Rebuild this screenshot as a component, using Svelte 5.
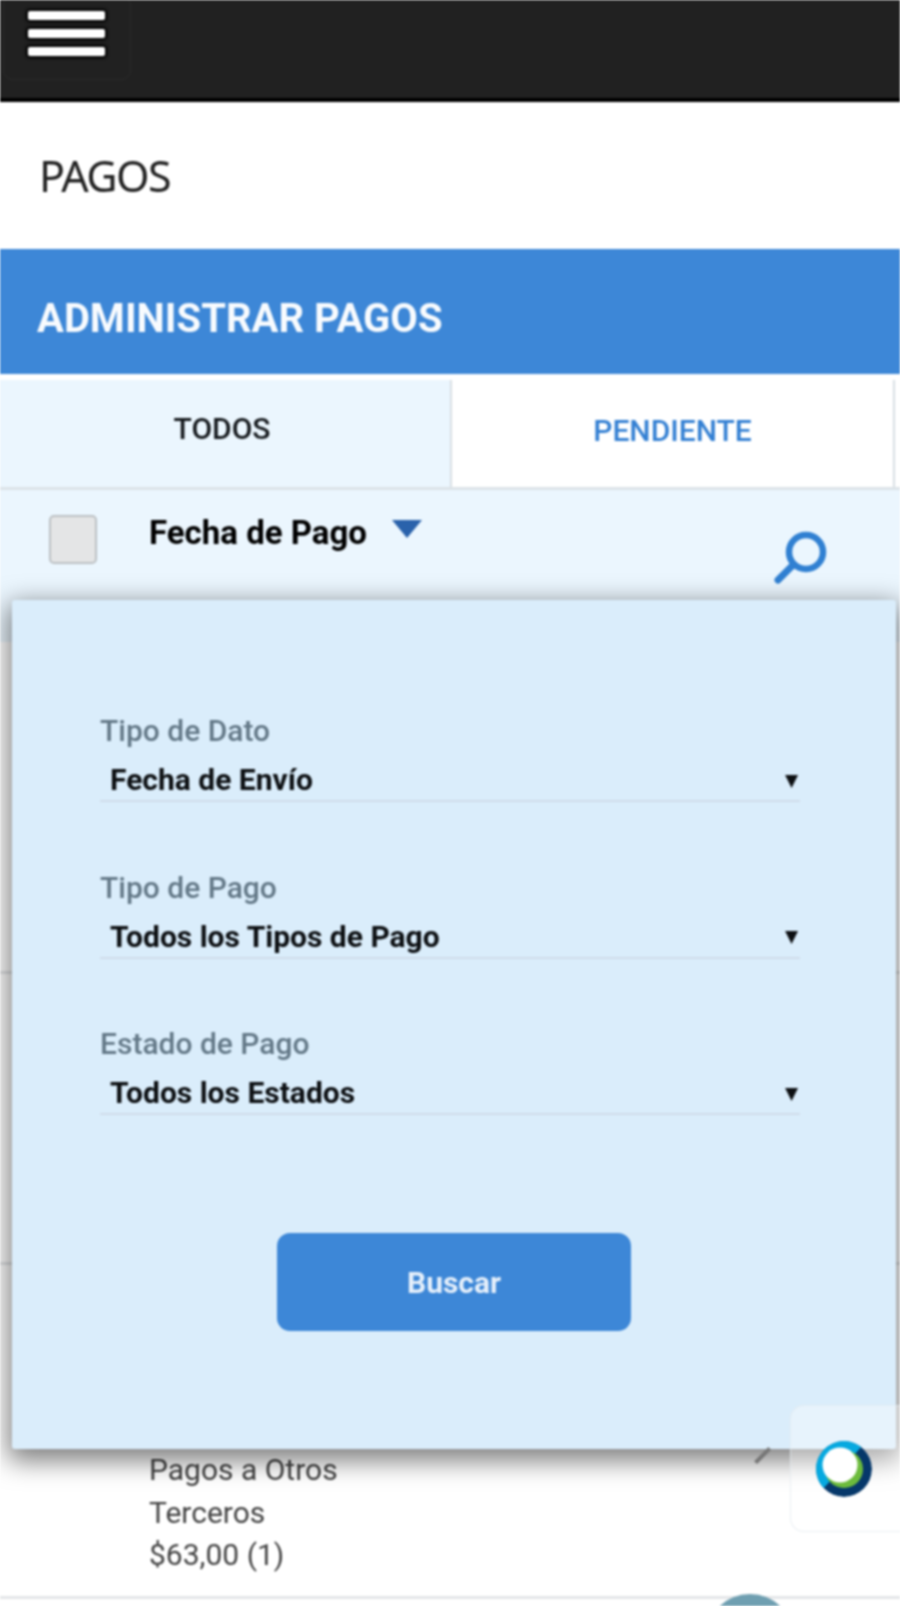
<script>
	const filters = [
		{ label: 'Tipo de Dato', value: 'Fecha de Envío' },
		{ label: 'Tipo de Pago', value: 'Todos los Tipos de Pago' },
		{ label: 'Estado de Pago', value: 'Todos los Estados' }
	];

	// the first rows sit behind the open search panel, only their dividers show
	const rows = [
		{ height: 332, lines: [] },
		{ height: 291, lines: [] },
		{ height: 334, lines: ['Pagos a Otros', 'Terceros', '$63,00 (1)'] }
	];
</script>

<div class="screen">
	<header class="topbar">
		<button class="menu" aria-label="Menú">
			<span></span>
			<span></span>
			<span></span>
		</button>
	</header>

	<h1 class="title">PAGOS</h1>
	<h2 class="banner">ADMINISTRAR PAGOS</h2>

	<nav class="tabs">
		<div class="tab">TODOS</div>
		<div class="tab active">PENDIENTE</div>
	</nav>

	<div class="toolbar">
		<span class="check"></span>
		<span class="sort">Fecha de Pago</span>
		<span class="sort-arrow"></span>
		<svg class="search" viewBox="0 0 54 54" fill="none" stroke="#3080d2" stroke-linecap="round">
			<circle cx="32" cy="21" r="17" stroke-width="6.5" />
			<path d="M19 34 4 49" stroke-width="7" />
		</svg>
	</div>

	<div class="list">
		{#each rows as row}
			<div class="row" style="height: {row.height}px">
				{#each row.lines as line}
					<p>{line}</p>
				{/each}
			</div>
		{/each}
	</div>

	<section class="panel">
		{#each filters as filter}
			<div class="field">
				<div class="label">{filter.label}</div>
				<div class="select">
					<span>{filter.value}</span>
					<span class="caret">▼</span>
				</div>
			</div>
		{/each}
		<button class="submit">Buscar</button>
	</section>

	<span class="row-mark"></span>
	<span class="fab"></span>

	<aside class="widget">
		<svg viewBox="0 0 56 56" width="56" height="56" fill="none">
			<circle cx="28" cy="28" r="23" stroke="#06386a" stroke-width="10" />
			<path d="M42 9.5A23 23 0 1 0 11 43.5" stroke="#06a9e0" stroke-width="10" />
			<circle cx="28" cy="28" r="19" fill="#6cbb3c" />
			<circle cx="24" cy="24" r="17.5" fill="#fff" />
		</svg>
	</aside>
</div>

<style>
	:global(body) {
		background: #fff;
	}

	.screen {
		position: relative;
		width: 900px;
		height: 1606px;
		overflow: hidden;
		background: #fff;
		font-family: Roboto, 'Liberation Sans', sans-serif;
		filter: blur(0.8px);
	}

	.topbar {
		display: flex;
		align-items: flex-start;
		height: 102px;
		box-sizing: border-box;
		background: #212121;
		border-bottom: 4px solid #000;
	}

	.menu {
		display: flex;
		flex-direction: column;
		gap: 9px;
		width: 128px;
		height: 84px;
		margin: -4px 0 0 3px;
		padding: 14px 0 0 24px;
		box-sizing: border-box;
		background: none;
		border: 1px solid #2b2b2b;
		border-radius: 10px;
	}

	.menu span {
		display: block;
		width: 77px;
		height: 9px;
		background: #fff;
		border-radius: 2px;
		box-shadow: 0 0 3px 2px #000;
	}

	.title {
		margin: 0;
		height: 147px;
		padding-left: 39px;
		box-sizing: border-box;
		line-height: 148px;
		font-family: 'Noto Sans', sans-serif;
		font-size: 43px;
		font-weight: 400;
		color: #222;
		letter-spacing: -1.6px;
	}

	.banner {
		margin: 0;
		height: 125px;
		padding-left: 37px;
		box-sizing: border-box;
		line-height: 140px;
		background: #3d87d7;
		color: #f8fbfe;
		font-size: 40px;
		font-weight: 700;
	}

	.tabs {
		display: flex;
		height: 116px;
		box-sizing: border-box;
		padding: 6px 5px 0 0;
		border-bottom: 3px solid #dce3e8;
	}

	.tab {
		flex: 1;
		display: flex;
		align-items: center;
		justify-content: center;
		padding-bottom: 7px;
		background: #ebf6fe;
		border-right: 2px solid #d8dfe4;
		font-size: 30px;
		font-weight: 500;
		color: #14181c;
	}

	.tab:first-child {
		flex: 0 0 452px;
		box-sizing: border-box;
		padding-right: 6px;
		padding-bottom: 11px;
	}

	.tab.active {
		background: #fff;
		color: #3480d3;
	}

	.toolbar {
		display: flex;
		align-items: flex-start;
		height: 152px;
		box-sizing: border-box;
		padding-top: 25px;
		background: #ebf6fe;
	}

	.check {
		width: 48px;
		height: 49px;
		margin-left: 49px;
		box-sizing: border-box;
		background: #e4e5e6;
		border: 2px solid #bcc0c3;
		border-radius: 5px;
	}

	.sort {
		margin: 0 0 0 52px;
		font-size: 33px;
		font-weight: 700;
		line-height: 36px;
		color: #000;
	}

	.sort-arrow {
		width: 0;
		height: 0;
		margin: 5px 0 0 25px;
		border: 15px solid transparent;
		border-top: 18px solid #2a62ab;
		border-bottom: 0;
	}

	.search {
		width: 54px;
		height: 54px;
		margin: 16px 0 0 352px;
	}

	.row {
		box-sizing: border-box;
		padding: 184px 0 0 149px;
		border-bottom: 3px solid #e4e6e8;
	}

	.row p {
		margin: 0;
		font-size: 30px;
		line-height: 42.5px;
		color: #444;
	}

	.panel {
		position: absolute;
		left: 12px;
		top: 600px;
		width: 884px;
		height: 849px;
		box-sizing: border-box;
		padding: 114px 96px 0 88px;
		background: #daedfb;
		border-radius: 3px;
		box-shadow: 0 8px 26px 4px rgba(0, 0, 0, 0.5);
	}

	.field {
		margin-bottom: 68.5px;
	}

	.label {
		font-size: 30px;
		font-weight: 500;
		line-height: 33px;
		color: #637887;
	}

	.select {
		display: flex;
		justify-content: space-between;
		align-items: center;
		height: 55px;
		padding: 12px 2px 0 10px;
		box-sizing: border-box;
		border-bottom: 2px solid #cfdcea;
		font-size: 30px;
		font-weight: 700;
		color: #0c0f12;
	}

	.caret {
		font-family: 'DejaVu Sans', sans-serif;
		font-size: 17px;
	}

	.submit {
		display: block;
		width: 354px;
		height: 98px;
		margin: 118px 0 0 177px;
		background: #3d87d7;
		border: 0;
		border-radius: 13px;
		color: #e6f0fb;
		font-family: inherit;
		font-size: 30px;
		font-weight: 700;
	}

	.row-mark {
		position: absolute;
		left: 757px;
		top: 1460px;
		width: 20px;
		height: 4px;
		background: #777;
		transform: rotate(-45deg);
		transform-origin: left bottom;
	}

	.fab {
		position: absolute;
		left: 706px;
		top: 1594px;
		width: 88px;
		height: 88px;
		border-radius: 50%;
		background: #6f9fb1;
	}

	.widget {
		position: absolute;
		left: 790px;
		top: 1405px;
		width: 130px;
		height: 127px;
		box-sizing: border-box;
		padding: 35px 0 0 25px;
		background: rgba(255, 255, 255, 0.35);
		border: 1px solid rgba(225, 232, 238, 0.7);
		border-radius: 14px;
	}

	.widget svg {
		display: block;
		border-radius: 50%;
	}
</style>
